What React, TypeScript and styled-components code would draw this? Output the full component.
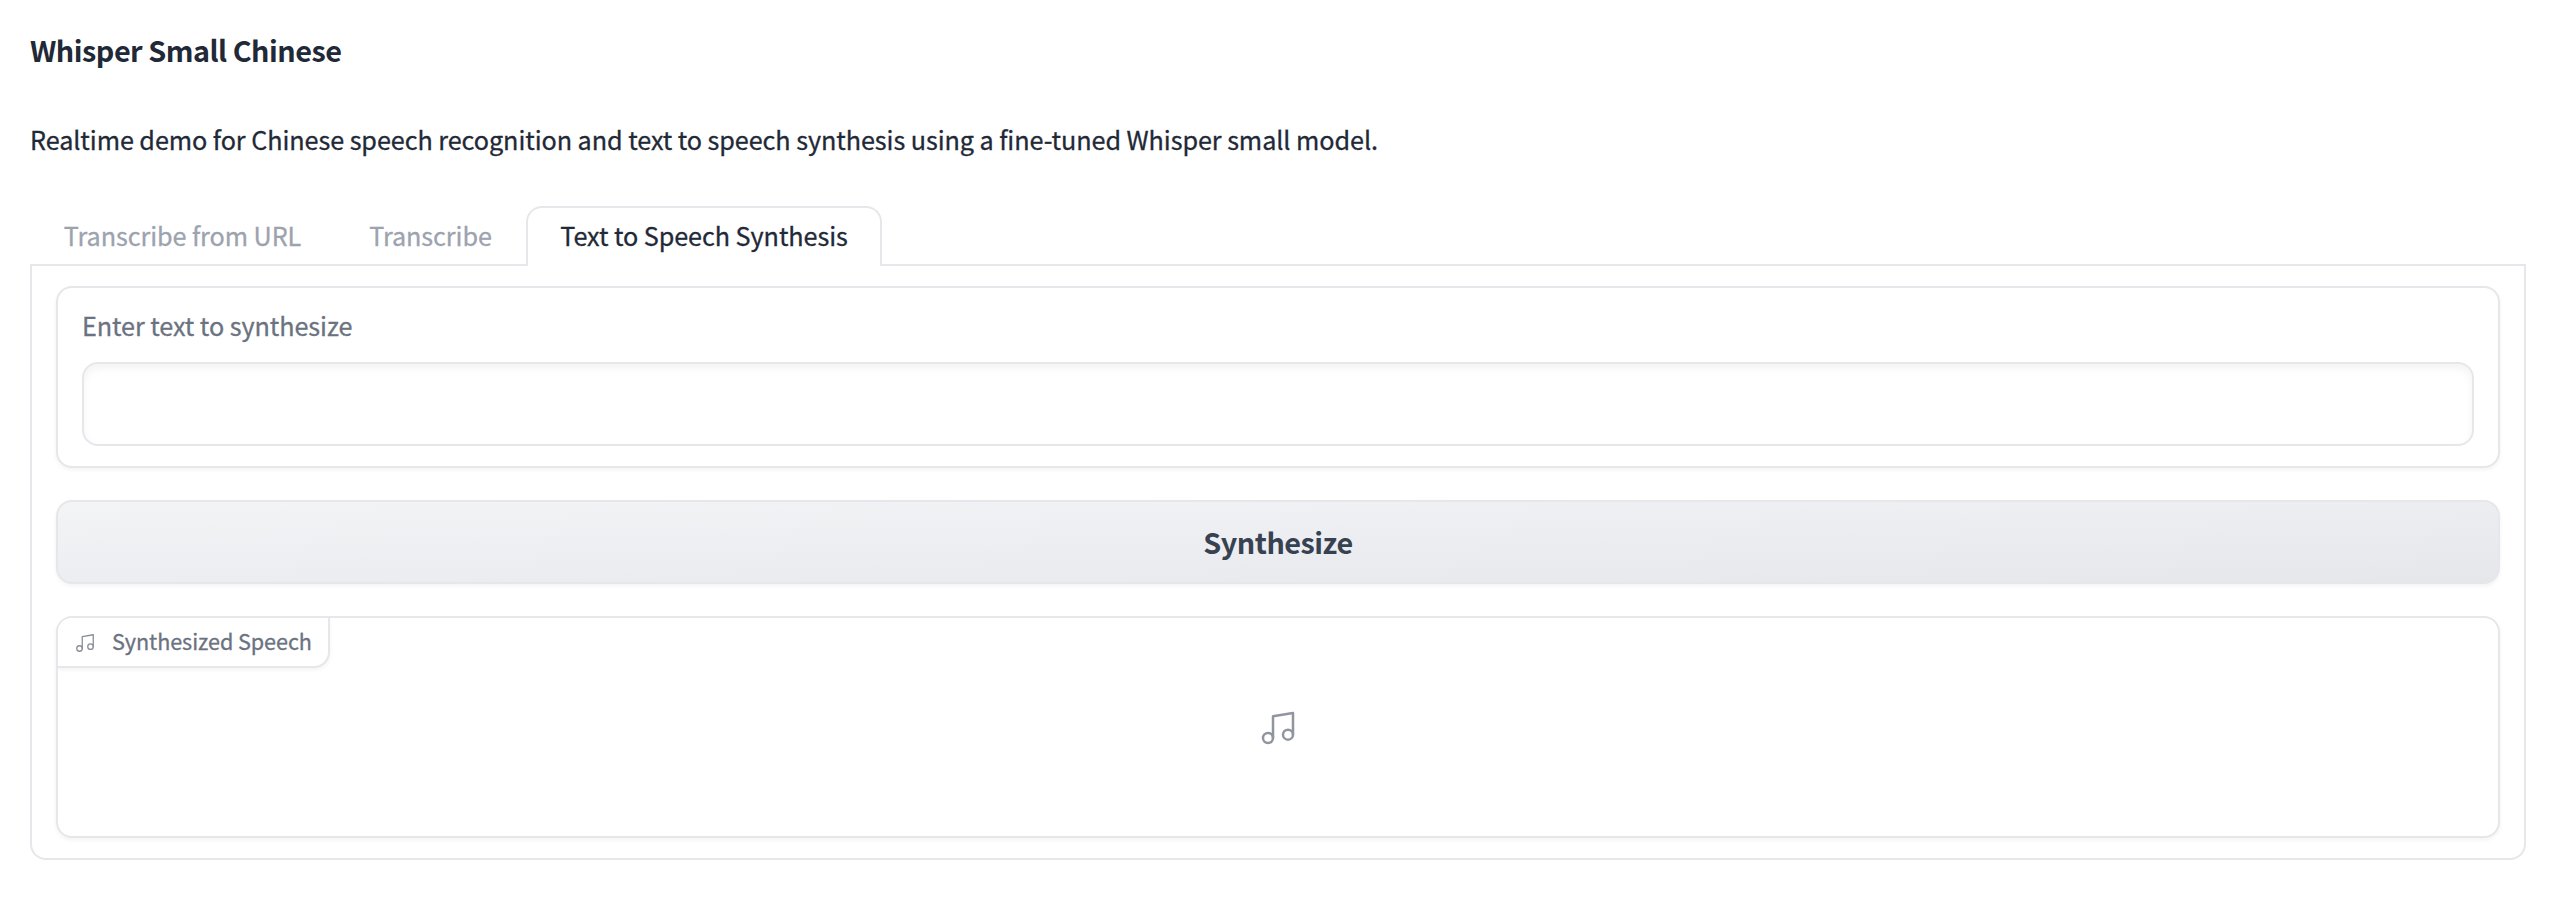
import React from "react";
import styled, { createGlobalStyle } from "styled-components";

const line = "#e5e7eb";

const GlobalStyle = createGlobalStyle`
  * { box-sizing: border-box; }
  body {
    margin: 0;
    background: #fff;
    color: #1f2937;
    font-family: "Noto Sans CJK SC", "Open Sans", sans-serif;
    font-size: 25.2px;
    line-height: 42px;
    letter-spacing: -0.065px;
    -webkit-text-stroke: 0.3px currentColor;
  }
`;

const Page = styled.main`
  display: flex;
  flex-direction: column;
  height: 904px;
  padding: 26px 46px 44px 30px;
`;

const Title = styled.h1`
  margin: 0 0 44px;
  font-size: 28.8px;
  line-height: 48px;
  font-weight: 700;
  letter-spacing: -0.49px;
  -webkit-text-stroke: 0;
`;

const Description = styled.p`
  margin: 0 0 46px;
  white-space: nowrap;
`;

const TabBar = styled.nav`
  display: flex;
  height: 60px;
  border-bottom: 2px solid ${line};
`;

const Tab = styled.button<{ $active?: boolean; $width: number }>`
  flex: none;
  width: ${(p) => p.$width}px;
  height: 60px;
  padding: 6px 0 10px;
  border: 2px solid ${(p) => (p.$active ? line : "transparent")};
  border-bottom: 0;
  border-radius: 16px 16px 0 0;
  background: ${(p) => (p.$active ? "#fff" : "transparent")};
  color: ${(p) => (p.$active ? "#1f2937" : "#9ca3af")};
  font: inherit;
  letter-spacing: inherit;
  white-space: nowrap;
`;

const Panel = styled.section`
  display: flex;
  flex-direction: column;
  gap: 32px;
  height: 594px;
  padding: 20px 24px;
  border: 2px solid ${line};
  border-top: 0;
  border-radius: 0 0 16px 16px;
`;

const Block = styled.div`
  border: 2px solid ${line};
  border-radius: 16px;
  background: #fff;
  box-shadow: 0 2px 4px rgba(0, 0, 0, 0.05);
`;

const Field = styled(Block)`
  display: flex;
  flex-direction: column;
  gap: 16px;
  height: 182px;
  padding: 16px 24px 20px;
`;

const FieldLabel = styled.label`
  color: #6b7280;
`;

const TextInput = styled.input`
  width: 100%;
  height: 84px;
  padding: 20px;
  border: 2px solid ${line};
  border-radius: 16px;
  outline: none;
  background: #fff;
  box-shadow: inset 0 4px 8px rgba(0, 0, 0, 0.05);
  font: inherit;
`;

const SubmitButton = styled.button`
  height: 84px;
  padding: 0;
  border: 2px solid ${line};
  border-radius: 16px;
  background: linear-gradient(to bottom right, #f3f4f6, #e5e7eb);
  box-shadow: 0 2px 4px rgba(0, 0, 0, 0.05);
  color: #374151;
  font: inherit;
  font-size: 28.8px;
  font-weight: 700;
  letter-spacing: -0.5px;
  -webkit-text-stroke: 0;
`;

const AudioBlock = styled(Block)`
  position: relative;
  display: flex;
  align-items: center;
  justify-content: center;
  height: 222px;
  padding-top: 1px;
  overflow: hidden;
  color: #9095a0;
`;

const Badge = styled.div`
  position: absolute;
  top: 0;
  left: 0;
  display: flex;
  align-items: center;
  gap: 16px;
  width: 272px;
  height: 50px;
  padding: 0 0 2px 16px;
  border: solid ${line};
  border-width: 0 2px 2px 0;
  border-radius: 0 0 16px 0;
  background: #fff;
  box-shadow: 0 2px 4px rgba(0, 0, 0, 0.05);
  color: #6b7280;
  font-size: 21.6px;
  white-space: nowrap;

  svg {
    margin-top: 3px;
    opacity: 0.8;
  }
`;

const MusicIcon = ({ size, stroke = 1.5 }: { size: number; stroke?: number }) => (
  <svg width={size} height={size} viewBox="0 0 24 24" fill="none" stroke="currentColor" strokeWidth={stroke} strokeLinecap="round" strokeLinejoin="round">
    <path d="M9 18V5l12-2v13" />
    <circle cx="6" cy="18" r="3" />
    <circle cx="18" cy="16" r="3" />
  </svg>
);

export default function App() {
  return (
    <>
      <GlobalStyle />
      <Page>
        <Title>Whisper Small Chinese</Title>
        <Description>
          Realtime demo for Chinese speech recognition and text to speech synthesis using a fine-tuned Whisper small model.
        </Description>
        <TabBar>
          <Tab $width={305}>Transcribe from URL</Tab>
          <Tab $width={191}>Transcribe</Tab>
          <Tab $width={356} $active>Text to Speech Synthesis</Tab>
        </TabBar>
        <Panel>
          <Field>
            <FieldLabel htmlFor="speech-text">Enter text to synthesize</FieldLabel>
            <TextInput id="speech-text" />
          </Field>
          <SubmitButton>Synthesize</SubmitButton>
          <AudioBlock>
            <Badge>
              <MusicIcon size={22} stroke={1.4} />
              Synthesized Speech
            </Badge>
            <MusicIcon size={40} />
          </AudioBlock>
        </Panel>
      </Page>
    </>
  );
}
